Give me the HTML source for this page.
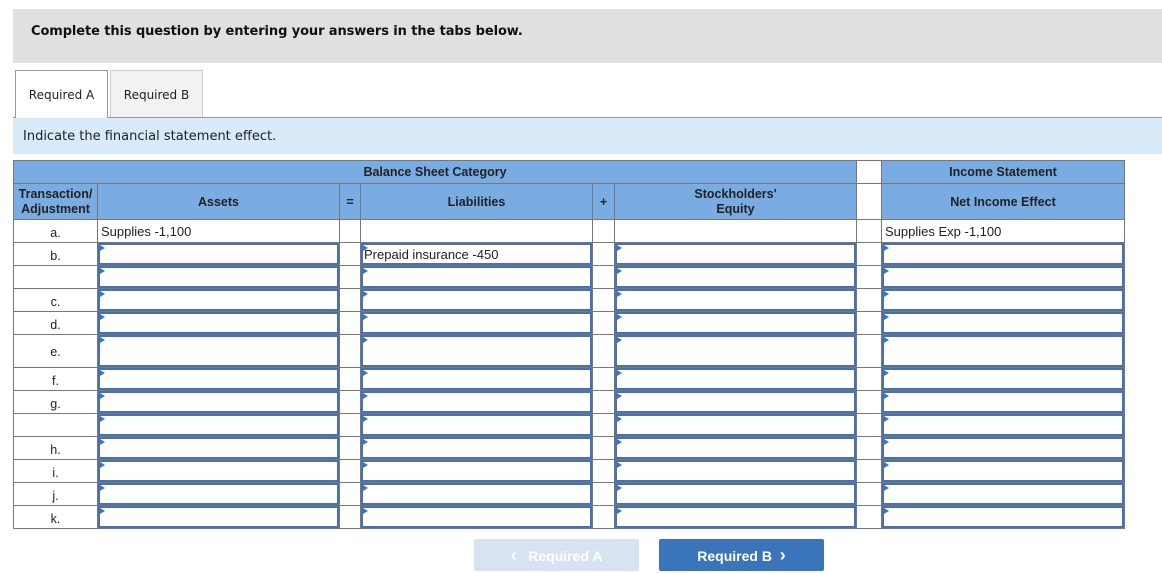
<!DOCTYPE html>
<html><head><meta charset="utf-8"><style>
body{margin:0;background:#fff;font-family:"Liberation Sans",Arial,sans-serif;width:1162px;height:573px;overflow:hidden;position:relative}
.top{position:absolute;left:13px;top:9px;width:1149px;height:54px;background:#e0e0e0}
.top b{position:absolute;left:18px;top:15px;font-family:"DejaVu Sans",sans-serif;font-size:13px;color:#111;letter-spacing:-0.1px}
.tab{position:absolute;top:70px;height:47px;font-family:"DejaVu Sans",sans-serif;font-size:12px;color:#222;box-sizing:border-box;text-align:center;line-height:49px}
.ta{left:15px;width:93px;border:1px solid #999;border-bottom:none;background:#fff;height:48px}
.tb{left:110px;width:93px;border:1px solid #ccc;border-bottom:none;background:#f2f2f2}
.line{position:absolute;left:13px;top:117px;width:1149px;height:1px;background:#999}
.ind{position:absolute;left:13px;top:118px;width:1149px;height:36px;background:#d9eaf8;font-family:"DejaVu Sans",sans-serif;font-size:13px;color:#222}
.ind span{position:absolute;left:10px;top:11px}
table{position:absolute;left:13px;top:160px;border-collapse:collapse;table-layout:fixed;font-size:13px;color:#222}
td{border:1px solid #777;padding:0;position:relative;box-sizing:border-box}
.h{background:#78ace3;font-weight:bold;font-size:12.5px;text-align:center;color:#222}
.w{background:#fff}
.lab{text-align:center;vertical-align:bottom;padding-bottom:2px;font-size:12.5px}
.in::after{content:"";position:absolute;left:0;top:0;right:0;bottom:0;border:2px solid #4472b4}
.in::before{content:"";position:absolute;left:2px;top:2px;border-left:5px solid #4472b4;border-top:3px solid transparent;border-bottom:3px solid transparent}
.t{padding-left:3px}
.btn{position:absolute;top:539px;width:165px;height:32px;border-radius:2px;font-weight:bold;font-size:14px;color:#fff;text-align:center;line-height:32px}
</style></head><body>
<div class="top"><b>Complete this question by entering your answers in the tabs below.</b></div>
<div class="tab tb">Required B</div>
<div class="line"></div>
<div class="tab ta">Required A</div>
<div class="ind"><span>Indicate the financial statement effect.</span></div>
<table>
<colgroup><col style="width:84px"><col style="width:242px"><col style="width:21px"><col style="width:232px"><col style="width:22px"><col style="width:242px"><col style="width:25px"><col style="width:243px"></colgroup>
<tr style="height:23px"><td class="h" colspan="6">Balance Sheet Category</td><td class="w"></td><td class="h">Income Statement</td></tr>
<tr style="height:36px"><td class="h" style="line-height:15px">Transaction/<br>Adjustment</td><td class="h">Assets</td><td class="h">=</td><td class="h">Liabilities</td><td class="h">+</td><td class="h" style="line-height:15px">Stockholders'<br>Equity</td><td class="w"></td><td class="h">Net Income Effect</td></tr>
<tr style="height:23px"><td class="lab">a.</td><td class="t">Supplies -1,100</td><td></td><td></td><td></td><td></td><td></td><td class="t">Supplies Exp -1,100</td></tr>
<tr style="height:23px"><td class="lab">b.</td><td class="in"></td><td></td><td class="in t">Prepaid insurance -450</td><td></td><td class="in"></td><td></td><td class="in"></td></tr>
<tr style="height:23px"><td class="lab"></td><td class="in"></td><td></td><td class="in"></td><td></td><td class="in"></td><td></td><td class="in"></td></tr>
<tr style="height:23px"><td class="lab">c.</td><td class="in"></td><td></td><td class="in"></td><td></td><td class="in"></td><td></td><td class="in"></td></tr>
<tr style="height:23px"><td class="lab">d.</td><td class="in"></td><td></td><td class="in"></td><td></td><td class="in"></td><td></td><td class="in"></td></tr>
<tr style="height:33px"><td class="lab" style="vertical-align:middle;padding:2px 0 0">e.</td><td class="in"></td><td></td><td class="in"></td><td></td><td class="in"></td><td></td><td class="in"></td></tr>
<tr style="height:23px"><td class="lab">f.</td><td class="in"></td><td></td><td class="in"></td><td></td><td class="in"></td><td></td><td class="in"></td></tr>
<tr style="height:23px"><td class="lab">g.</td><td class="in"></td><td></td><td class="in"></td><td></td><td class="in"></td><td></td><td class="in"></td></tr>
<tr style="height:23px"><td class="lab"></td><td class="in"></td><td></td><td class="in"></td><td></td><td class="in"></td><td></td><td class="in"></td></tr>
<tr style="height:23px"><td class="lab">h.</td><td class="in"></td><td></td><td class="in"></td><td></td><td class="in"></td><td></td><td class="in"></td></tr>
<tr style="height:23px"><td class="lab">i.</td><td class="in"></td><td></td><td class="in"></td><td></td><td class="in"></td><td></td><td class="in"></td></tr>
<tr style="height:23px"><td class="lab">j.</td><td class="in"></td><td></td><td class="in"></td><td></td><td class="in"></td><td></td><td class="in"></td></tr>
<tr style="height:23px"><td class="lab">k.</td><td class="in"></td><td></td><td class="in"></td><td></td><td class="in"></td><td></td><td class="in"></td></tr>
</table>
<div class="btn" style="left:474px;background:#d8e3f1"><span style="font-size:18px">&lsaquo;</span>&nbsp;&nbsp; Required A</div>
<div class="btn" style="left:659px;background:#3a75bb">Required B &nbsp;<span style="font-size:18px">&rsaquo;</span></div>
</body></html>
